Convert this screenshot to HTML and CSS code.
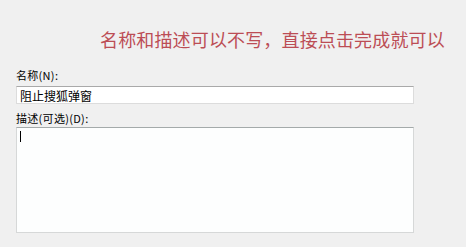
FILE: index.html
```html
<!DOCTYPE html>
<html lang="zh-CN">
<head>
  <meta charset="UTF-8">
  <title>名称和描述</title>
  <link rel="stylesheet" href="styles.css">
</head>
<body>
  <div class="tip">名称和描述可以不写，直接点击完成就可以</div>

  <div class="form">
    <label class="label" for="name">名称(N):</label>
    <input class="field" id="name" type="text" value="阻止搜狐弹窗">

    <label class="label label-desc">描述(可选)(D):</label>
    <div class="area"><span class="caret"></span></div>
  </div>
</body>
</html>
```

FILE: styles.css
```css
body {
  margin: 0;
  background-color: #f0f0f0;
  font-family: "Noto Sans CJK SC", "Liberation Sans", sans-serif;
  color: #000;
}
.tip {
  margin-top: 29px;
  padding-left: 100px;
  font-size: 18px;
  line-height: 20px;
  color: #bc4d55;
  letter-spacing: 0.15px;
}
.form {
  width: 398px;
  margin: 18px 0 0 16px;
}
.label {
  display: block;
  font-size: 11px;
  line-height: 16px;
  letter-spacing: 0.3px;
}
.label-desc {
  margin-top: 6px;
}
.field {
  display: block;
  box-sizing: border-box;
  width: 398px;
  height: 18px;
  margin: 3px 0 0 0;
  padding: 0 3px;
  border: 1px solid #dcdcdc;
  border-top-color: #a9a9a9;
  background: #fff;
  font-family: "Noto Sans CJK SC", sans-serif;
  font-size: 12px;
  color: #000;
  outline: none;
}
.area {
  box-sizing: border-box;
  width: 398px;
  height: 106px;
  margin-top: 1px;
  padding: 3px 0 0 3px;
  border: 1px solid #d6d8d8;
  border-top-color: #a4aaaa;
  background: #fdfefe;
}
.caret {
  display: block;
  width: 1px;
  height: 11px;
  background: #000;
}
```
